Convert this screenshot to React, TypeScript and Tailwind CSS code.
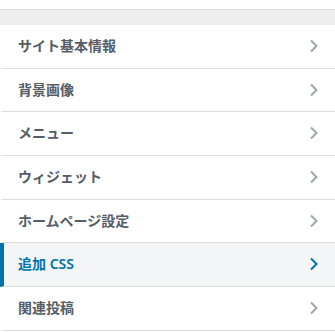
import React from "react";

type Section = { label: string; active?: boolean };

const sections: Section[] = [
    { label: "サイト基本情報" },
    { label: "背景画像" },
    { label: "メニュー" },
    { label: "ウィジェット" },
    { label: "ホームページ設定" },
    { label: "追加 CSS", active: true },
    { label: "関連投稿" },
];

function Chevron({ active }: { active?: boolean }) {
    return (
        <svg
            width="10"
            height="14"
            viewBox="0 0 10 14"
            className={active ? "text-[#0073aa]" : "text-[#a0a5aa]"}
        >
            <path d="M2 1.5 L7.5 7 L2 12.5" fill="none" stroke="currentColor" strokeWidth="2" />
        </svg>
    );
}

export default function App() {
    return (
        <main
            className="w-[335px] h-[332px] overflow-hidden bg-white"
            style={{ fontFamily: '"Noto Sans", "Noto Sans CJK JP", sans-serif' }}
        >
            <div className="h-[9px] bg-white" />
            <div className="h-[16px] bg-[#eeeeee] border-t border-[#dddddd]" />
            <ul>
                {sections.map((s) => (
                    <li
                        key={s.label}
                        className={
                            s.active
                                ? "flex items-center justify-between border-b border-[#dddddd] border-l-4 border-l-[#0073aa] bg-[#f3f5f6] pl-[14px] pr-[16px] pt-[10px] pb-[11px] text-[14px] leading-[1.55] font-semibold text-[#0073aa]"
                                : "flex items-center justify-between border-b border-[#dddddd] border-l-4 border-l-white bg-white pl-[14px] pr-[16px] pt-[10px] pb-[11px] text-[14px] leading-[1.55] font-semibold text-[#555d66]"
                        }
                    >
                        <span>{s.label}</span>
                        <Chevron active={s.active} />
                    </li>
                ))}
            </ul>
        </main>
    );
}
